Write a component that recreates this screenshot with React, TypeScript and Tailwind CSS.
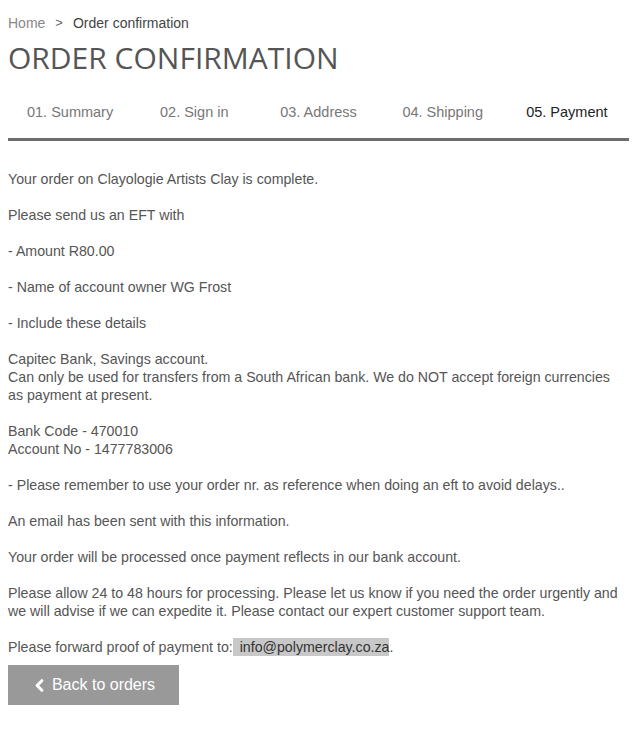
import { ChevronLeft } from 'lucide-react'

const steps = ['01. Summary', '02. Sign in', '03. Address', '04. Shipping', '05. Payment']

export default function App() {
  return (
    <div className="bg-white px-[8px] pt-[14px] pb-6 text-[14.2px] leading-[18px] text-[#555] font-['Liberation_Sans',Arial,sans-serif]">
      <nav className="flex items-center text-[14px] leading-[18px]">
        <span className="text-[#888]">Home</span>
        <span className="mx-[10px] text-[#666] text-[13px]">&gt;</span>
        <span className="text-[#444]">Order confirmation</span>
      </nav>

      <h1 className="mt-[6px] text-[30px] leading-[40px] text-[#555] font-['Open_Sans',sans-serif] uppercase">
        Order confirmation
      </h1>

      <div className="mt-[25px] w-[621px] grid grid-cols-5 border-b-[3px] border-[#6d6d6d] text-[14.5px]">
        {steps.map((step, i) => (
          <div
            key={step}
            className={`text-center pb-[17px] ${i === 4 ? 'text-[#222]' : 'text-[#777]'}`}
          >
            {step}
          </div>
        ))}
      </div>

      <div className="mt-[29px] w-[617px] space-y-[18px]">
        <p>Your order on Clayologie Artists Clay is complete.</p>
        <p>Please send us an EFT with</p>
        <p>- Amount R80.00</p>
        <p>- Name of account owner WG Frost</p>
        <p>- Include these details</p>
        <p>
          Capitec Bank, Savings account.
          <br />
          Can only be used for transfers from a South African bank. We do NOT accept foreign currencies as payment at present.
        </p>
        <p>
          Bank Code - 470010
          <br />
          Account No - 1477783006
        </p>
        <p>- Please remember to use your order nr. as reference when doing an eft to avoid delays..</p>
        <p>An email has been sent with this information.</p>
        <p>Your order will be processed once payment reflects in our bank account.</p>
        <p>
          Please allow 24 to 48 hours for processing. Please let us know if you need the order urgently and we will advise if we can expedite it. Please contact our expert customer support team.
        </p>
        <p>
          Please forward proof of payment to:
          <span className="bg-[#c8c8c8] text-[#333] py-[1px] pl-[3px]"> info@polymerclay.co.za</span>.
        </p>
      </div>

      <button className="mt-[9px] h-[40px] w-[171px] bg-[#999] text-white text-[16px] flex items-center justify-center gap-[3px]">
        <ChevronLeft size={19} strokeWidth={4} className="-ml-[2px]" />
        Back to orders
      </button>
    </div>
  )
}
